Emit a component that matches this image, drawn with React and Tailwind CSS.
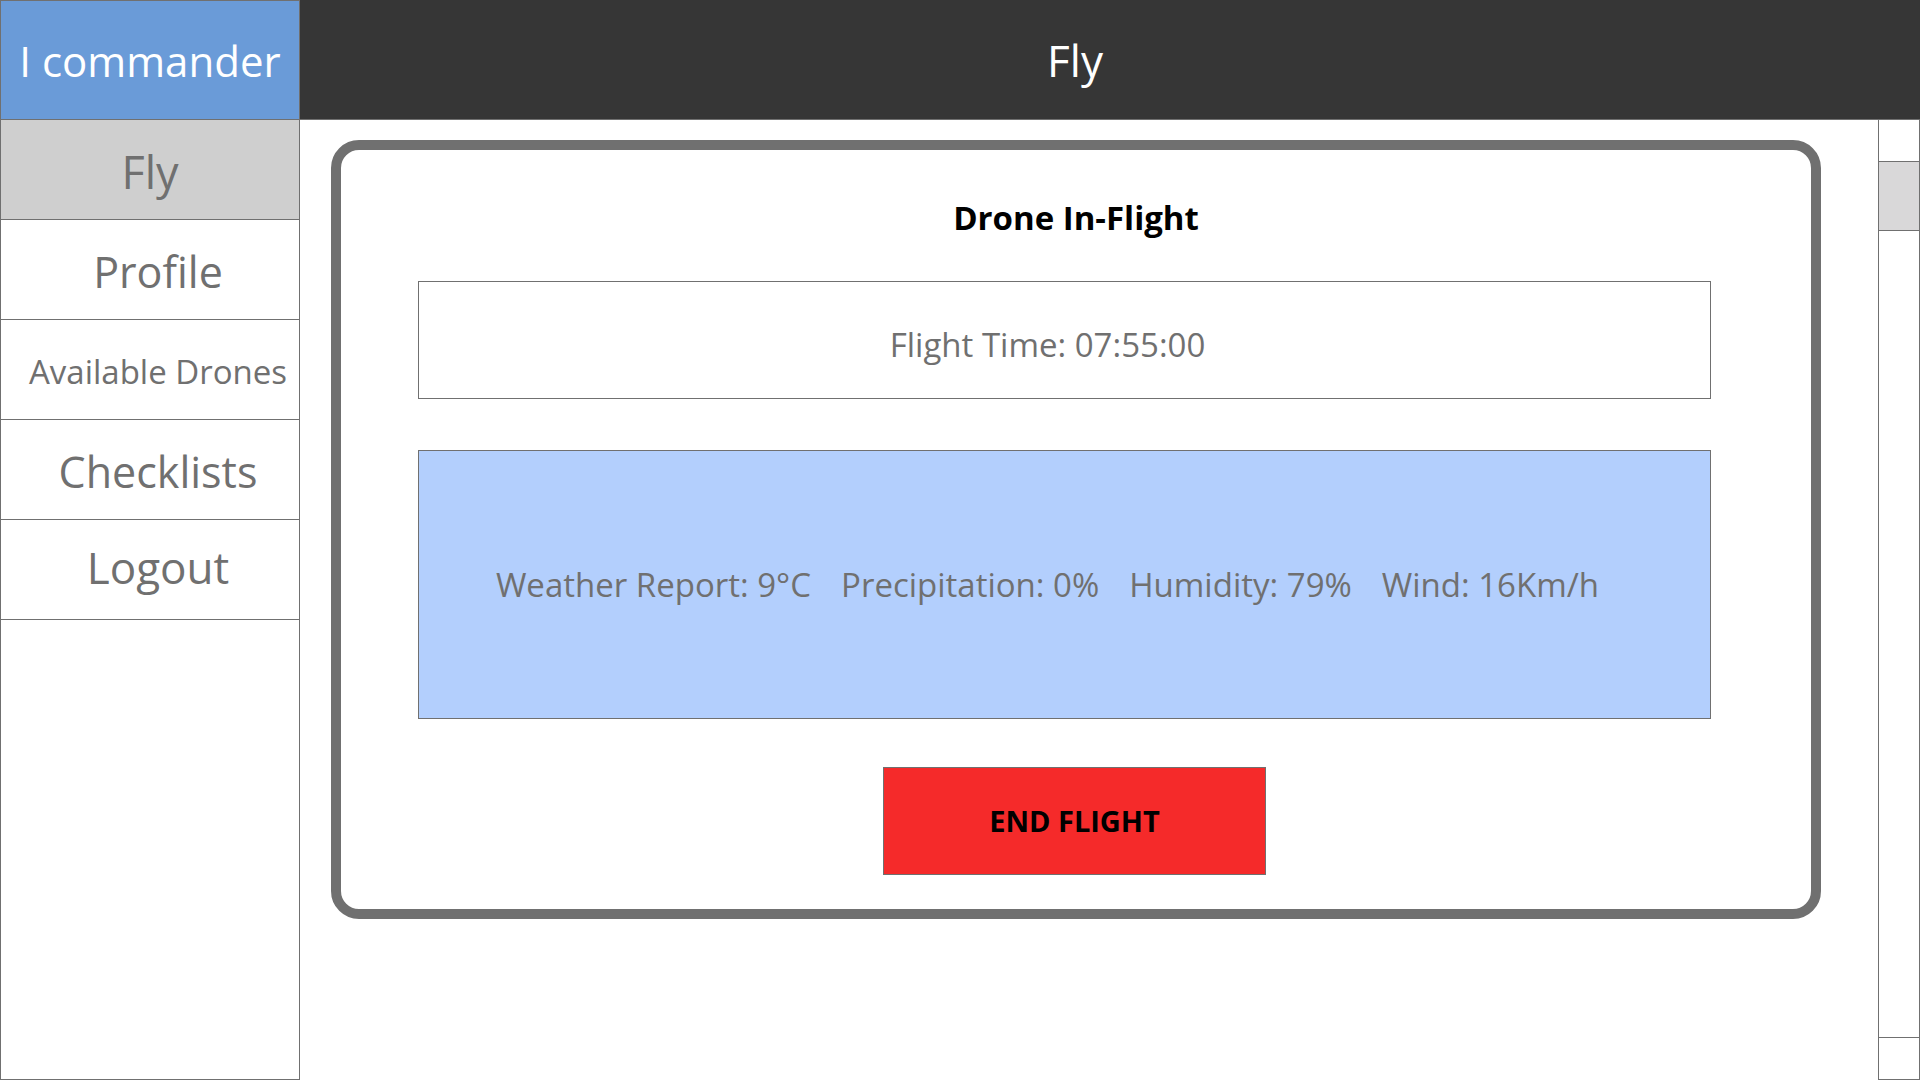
import React from "react";

const font = { fontFamily: '"Open Sans", "Noto Sans", sans-serif' };

function NavItem({ label, active, cls }) {
  return (
    <div
      className={`h-[100px] border-b border-[#707070] flex items-center justify-center text-[#707070] ${
        active ? "bg-[#cfcfcf]" : "bg-white pl-[16px]"
      } ${cls}`}
    >
      {label}
    </div>
  );
}

export default function App() {
  return (
    <div className="w-[1920px] h-[1080px] flex bg-white overflow-hidden" style={font}>
      <aside className="w-[300px] h-full flex flex-col border-l border-t border-b border-r border-[#707070] bg-white">
        <div className="h-[119px] border-b border-[#707070] bg-[#6a9bd8] flex items-center justify-center text-white text-[42px]">
          I commander
        </div>
        <NavItem label="Fly" active cls="text-[45px] pt-[4px]" />
        <NavItem label="Profile" cls="text-[43px] pt-[6px]" />
        <NavItem label="Available Drones" cls="text-[33px] pt-[4px]" />
        <NavItem label="Checklists" cls="text-[43px] pt-[5px]" />
        <NavItem label="Logout" cls="text-[44px] pb-[6px]" />
      </aside>

      <main className="flex-1 h-full flex flex-col">
        <header className="h-[120px] bg-[#363636] border-b border-[#707070] flex items-center justify-center pr-[70px] text-white text-[44px]">
          Fly
        </header>
        <div className="flex-1 flex">
          <div className="flex-1 pl-[31px] pt-[20px]">
            <section className="w-[1490px] h-[779px] border-[10px] border-[#707070] rounded-[28px] flex flex-col">
              <h1 className="mt-[48px] h-[40px] leading-[40px] text-center font-bold text-black text-[33px]">
                Drone In-Flight
              </h1>
              <div className="mt-[43px] ml-[77px] w-[1293px] h-[118px] border border-[#707070] flex items-center justify-center pt-[10px] pr-[34px] text-[#707070] text-[33px]">
                Flight Time: 07:55:00
              </div>
              <div className="mt-[51px] ml-[77px] w-[1293px] h-[269px] border border-[#707070] bg-[#b3cffd] flex items-center justify-center gap-[30px] pr-[34px] text-[#707070] text-[33px]">
                <span>Weather Report: 9°C</span>
                <span>Precipitation: 0%</span>
                <span>Humidity: 79%</span>
                <span>Wind: 16Km/h</span>
              </div>
              <div className="mt-[48px] ml-[542px] w-[383px] h-[108px] border border-[#707070] bg-[#f52a2a] flex items-center justify-center font-bold text-black text-[29px]">
                END FLIGHT
              </div>
            </section>
          </div>
          <div className="w-[42px] h-full border-l border-r border-b border-[#707070] flex flex-col">
            <div className="h-[42px] border-b border-[#707070]"></div>
            <div className="h-[69px] bg-[#d9d8d9] border-b border-[#707070]"></div>
            <div className="flex-1"></div>
            <div className="h-[42px] border-t border-[#707070]"></div>
          </div>
        </div>
      </main>
    </div>
  );
}
